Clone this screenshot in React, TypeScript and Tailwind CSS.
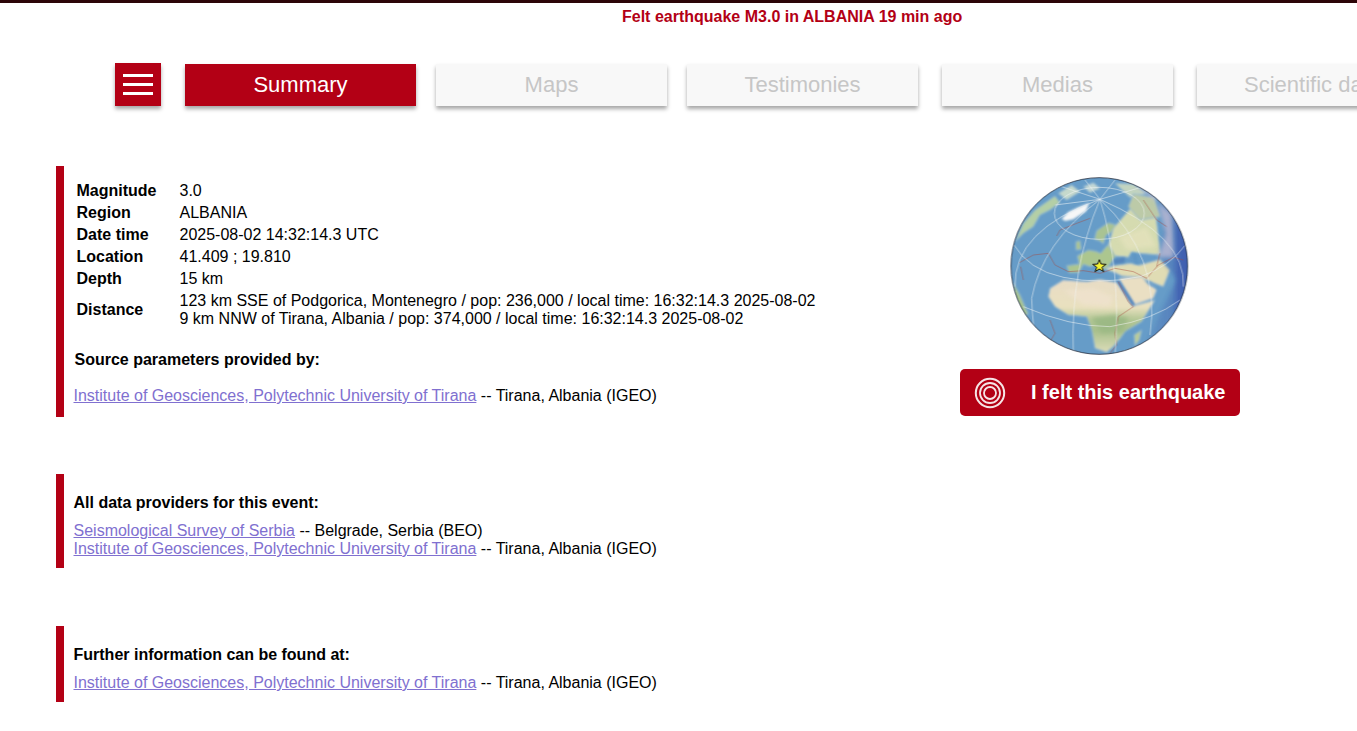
import React from "react";

const RED = "bg-[#b30015]";

const tabs = ["Maps", "Testimonies", "Medias", "Scientific data"];

const details = [
	{ label: "Magnitude", value: "3.0" },
	{ label: "Region", value: "ALBANIA" },
	{ label: "Date time", value: "2025-08-02 14:32:14.3 UTC" },
	{ label: "Location", value: "41.409 ; 19.810" },
	{ label: "Depth", value: "15 km" },
];

const ProviderLine = ({ name, rest }: { name: string; rest: string }) => (
	<p className="leading-[18px]">
		<a href="#" className="text-[#8070d0] underline">
			{name}
		</a>{" "}
		-- {rest}
	</p>
);

// hand drawn globe, coordinates are those of the 3x crop
const Globe = () => (
	<svg width="200" height="190" viewBox="0 0 600 570" className="block">
		<defs>
			<clipPath id="disc">
				<circle cx="298" cy="288" r="265" />
			</clipPath>
			<linearGradient id="africa" x1="0" y1="0" x2="0" y2="1">
				<stop offset="0" stopColor="#e8dcc6" />
				<stop offset="0.38" stopColor="#e9e1bf" />
				<stop offset="0.55" stopColor="#b4c796" />
				<stop offset="0.7" stopColor="#a8c08c" />
				<stop offset="1" stopColor="#dcdcb8" />
			</linearGradient>
			<linearGradient id="night" x1="0" y1="0" x2="1" y2="0">
				<stop offset="0" stopColor="#3c57ab" stopOpacity="0" />
				<stop offset="0.55" stopColor="#3c57ab" stopOpacity="0.35" />
				<stop offset="1" stopColor="#2f4aa6" stopOpacity="0.9" />
			</linearGradient>
			<filter id="soft">
				<feGaussianBlur stdDeviation="6" />
			</filter>
			<filter id="softer">
				<feGaussianBlur stdDeviation="2.6" />
			</filter>
		</defs>
		<g clipPath="url(#disc)">
			<rect width="600" height="570" fill="#669cc8" />
			<g filter="url(#softer)" stroke="#8db6d3" strokeWidth="3" strokeLinejoin="round">
				{/* north america */}
				<path d="M45 215 L70 160 L105 120 L165 78 L180 98 L150 120 L120 135 L100 170 L70 190 Z" fill="#b4cfa6" />
				<path d="M175 70 L215 45 L240 65 L200 90 Z" fill="#c6d9cc" />
				{/* arctic islands */}
				<path d="M250 50 L280 38 L300 55 L270 68 Z" fill="#c4d8d4" />
				<path d="M345 40 L400 42 L440 70 L390 82 Z" fill="#c2d4c0" />
				{/* south america */}
				<path d="M38 335 L60 375 L85 432 L70 440 L45 400 Z" fill="#a8c490" />
				{/* britain */}
				<path d="M228 215 L240 212 L244 238 L228 240 Z" fill="#acc490" />
				{/* europe */}
				<path d="M207 308 L200 287 L238 282 L232 258 L265 240 L288 244 L302 250 L322 226 L345 232 L345 262 L325 290 L304 302 L292 282 L270 290 L250 283 L236 308 Z" fill="#acc68f" />
				<path d="M283 208 L290 182 L325 158 L352 166 L335 186 L318 196 L310 222 L298 212 Z" fill="#a9c393" />
				{/* russia */}
				<path d="M340 175 L400 105 L465 115 L482 255 L420 250 L395 245 L385 262 L345 258 L325 225 Z" fill="#d5dbb0" />
				<path d="M400 72 L462 82 L482 140 L420 150 L385 110 Z" fill="#bccaa8" />
				{/* turkey, iran, arabia */}
				<path d="M312 296 L345 286 L390 280 L420 285 L480 268 L510 300 L490 350 L450 335 L410 322 L365 318 L345 308 Z" fill="#e0dcb4" />
				<path d="M356 325 L425 320 L470 360 L460 385 L404 404 Z" fill="#eadfc3" />
				{/* africa */}
				<path d="M145 380 L150 355 L190 330 L260 335 L300 328 L352 338 L398 408 L465 390 L425 455 L375 485 L365 500 L340 530 L320 547 L285 535 L275 480 L260 440 L205 435 L165 410 Z" fill="url(#africa)" />
				<path d="M402 495 L425 480 L418 510 L405 527 Z" fill="#b9cb9a" />
			</g>
			<g filter="url(#soft)">
				<path d="M190 360 L280 355 L340 380 L330 410 L250 405 Z" fill="#efe2cd" opacity="0.85" />
				<path d="M275 445 L345 435 L385 445 L365 485 L305 490 Z" fill="#9cb985" />
				<path d="M355 200 L440 170 L470 230 L380 240 Z" fill="#e5e2bd" opacity="0.7" />
			</g>
			{/* inland seas */}
			<g filter="url(#softer)">
				<path d="M340 268 L375 262 L373 278 L343 282 Z" fill="#5484ba" />
				<path d="M396 250 L410 252 L418 285 L403 280 Z" fill="#5f96c5" />
				<path d="M354 334 L401 405" fill="none" stroke="#4f7cb6" strokeWidth="6" />
				<path d="M432 328 L452 336 L470 352 L448 346 Z" fill="#72a3ca" />
			</g>
			{/* greenland ice */}
			<path d="M185 146 L205 126 L235 112 L268 98 L258 124 L220 148 L195 153 Z" fill="#f6f7f7" filter="url(#softer)" />
			{/* day and night band */}
			<path d="M405 30 L472 65 L495 160 L480 260 L530 330 L480 430 L420 570 L600 570 L600 0 L410 0 Z" fill="url(#night)" filter="url(#soft)" />
			<path d="M405 45 L465 70 L498 190 L474 262 L522 262 L515 130 Z" fill="#c4bfd4" fillOpacity="0.75" filter="url(#soft)" />
			<rect x="528" y="0" width="72" height="570" fill="#3550ab" fillOpacity="0.45" filter="url(#soft)" />
			{/* plate boundaries */}
			<g fill="none" stroke="#a8473c" strokeWidth="1.6" opacity="0.85">
				<path d="M58 278 L100 255 L145 250 L165 285 L205 305 L250 302 L300 310 L345 295 L400 305 L440 325 L475 285 L520 262 L550 270" />
				<path d="M355 335 L385 395 L400 410 L355 440 L345 490 L350 525 L330 550" />
				<path d="M170 198 L180 180 L230 160 L270 145" />
				<path d="M62 290 L70 330 M150 450 L165 490 L150 515" />
				<path d="M430 90 L470 150 L500 170 M470 290 L480 250" />
			</g>
			{/* graticule */}
			<g fill="none" stroke="#f3f6f7" strokeWidth="1.8" opacity="0.9">
				<ellipse cx="298" cy="130" rx="135" ry="78" />
				<path d="M40 222 Q85 300 190 322 Q300 345 420 320 Q510 290 556 225" />
				<path d="M70 410 Q210 470 330 470 Q460 450 540 390" />
				<path d="M300 88 Q125 220 95 385 Q98 480 112 520" />
				<path d="M300 88 Q210 300 220 552" />
				<path d="M300 88 Q365 300 345 560" />
				<path d="M300 88 Q485 260 450 495" />
				<path d="M300 88 L170 45 M300 88 L255 30 M300 88 L345 30 M300 88 L430 50 M300 88 L165 105" />
				<path d="M300 88 Q40 180 45 350" />
				<path d="M300 88 Q560 200 550 350" />
			</g>
		</g>
		<circle cx="298" cy="288" r="265" fill="none" stroke="#2a3140" strokeWidth="2.4" />
		<polygon
			points="298,269 303,282 318,283 306,292 311,305 298,297 285,305 290,292 278,283 293,282"
			fill="#f4f234"
			stroke="#111"
			strokeWidth="3"
		/>
	</svg>
);

const App = () => {
	return (
		<div className="h-[731px] w-full overflow-hidden bg-white text-[16px] text-black font-['Liberation_Sans',Arial,sans-serif]">
			<div className="h-[3px] bg-[#2c0508]" />
			<p className="h-[60px] pl-[622px] pt-[4px] text-[16px] font-bold leading-[20px] text-[#b30015]">
				Felt earthquake M3.0 in ALBANIA 19 min ago
			</p>

			<nav className="flex h-[43px] items-start pl-[115px]">
				<button className={`${RED} mr-[24px] flex h-[43px] w-[46px] shrink-0 flex-col items-center justify-center gap-[6px] shadow-[0_3px_4px_rgba(0,0,0,0.35)]`}>
					<span className="h-[3px] w-[30px] bg-white" />
					<span className="h-[3px] w-[30px] bg-white" />
					<span className="h-[3px] w-[30px] bg-white" />
				</button>
				<a className={`${RED} mr-[20px] mt-[1px] flex h-[42px] w-[231px] shrink-0 items-center justify-center pb-[2px] text-[22px] text-white shadow-[0_3px_4px_rgba(0,0,0,0.35)]`}>
					Summary
				</a>
				{tabs.map((tab, i) => (
					<a
						key={tab}
						className={`mt-[1px] flex h-[42px] w-[231px] shrink-0 items-center justify-center whitespace-nowrap bg-[#f8f8f8] pb-[2px] text-[22px] text-[#c6c6c6] shadow-[0_3px_4px_rgba(0,0,0,0.35)] ${i === 1 || i === 2 ? "mr-[24px]" : "mr-[20px]"}`}
					>
						{tab}
					</a>
				))}
			</nav>

			<div className="flex pl-[56px] pt-[60px]">
				<section className="h-[251px] w-[904px] shrink-0 border-l-[8px] border-[#b30015] pl-[9.5px] pt-[14px]">
					<div className="pl-[3px]">
						<div className="grid grid-cols-[103px_1fr]">
							{details.map((row) => (
								<React.Fragment key={row.label}>
									<span className="font-bold leading-[22px]">{row.label}</span>
									<span className="leading-[22px]">{row.value}</span>
								</React.Fragment>
							))}
							<span className="self-center font-bold leading-[22px]">Distance</span>
							<div className="pb-[1px] pt-[2px] leading-[18px]">
								<p>123 km SSE of Podgorica, Montenegro / pop: 236,000 / local time: 16:32:14.3 2025-08-02</p>
								<p>9 km NNW of Tirana, Albania / pop: 374,000 / local time: 16:32:14.3 2025-08-02</p>
							</div>
						</div>
					</div>
					<p className="pl-[1px] pt-[20px] font-bold leading-[22px]">Source parameters provided by:</p>
					<div className="pt-[16px]">
						<ProviderLine name="Institute of Geosciences, Polytechnic University of Tirana" rest="Tirana, Albania (IGEO)" />
					</div>
				</section>

				<div className="flex w-[280px] shrink-0 flex-col items-center pt-[4px]">
					<Globe />
					<button className={`${RED} mt-[9px] flex h-[47px] w-[280px] items-center rounded-[5px] pl-[14px]`}>
						<svg width="32" height="32" viewBox="0 0 32 32" className="shrink-0">
							<g fill="none" stroke="#f6e4e6">
								<circle cx="16" cy="16" r="14.2" strokeWidth="2" />
								<circle cx="16" cy="16" r="10" strokeWidth="1.8" />
								<circle cx="16" cy="16" r="6" strokeWidth="1.8" />
							</g>
						</svg>
						<span className="pb-[1px] pl-[25px] text-[20px] font-bold text-white">I felt this earthquake</span>
					</button>
				</div>
			</div>

			<section className="ml-[56px] mt-[57px] h-[94px] border-l-[8px] border-[#b30015] pl-[9.5px] pt-[18px]">
				<p className="font-bold leading-[22px]">All data providers for this event:</p>
				<div className="pt-[8px]">
					<ProviderLine name="Seismological Survey of Serbia" rest="Belgrade, Serbia (BEO)" />
					<ProviderLine name="Institute of Geosciences, Polytechnic University of Tirana" rest="Tirana, Albania (IGEO)" />
				</div>
			</section>

			<section className="ml-[56px] mt-[58px] h-[76px] border-l-[8px] border-[#b30015] pl-[9.5px] pt-[18px]">
				<p className="font-bold leading-[22px]">Further information can be found at:</p>
				<div className="pt-[8px]">
					<ProviderLine name="Institute of Geosciences, Polytechnic University of Tirana" rest="Tirana, Albania (IGEO)" />
				</div>
			</section>
		</div>
	);
};

export default App;
